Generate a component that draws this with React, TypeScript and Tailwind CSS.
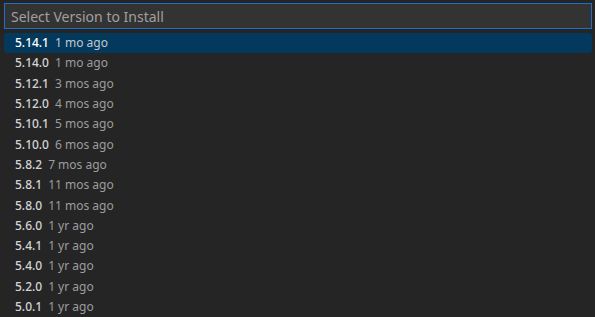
import React from "react";

const items: [string, string][] = [
  ["5.14.1", "1 mo ago"],
  ["5.14.0", "1 mo ago"],
  ["5.12.1", "3 mos ago"],
  ["5.12.0", "4 mos ago"],
  ["5.10.1", "5 mos ago"],
  ["5.10.0", "6 mos ago"],
  ["5.8.2", "7 mos ago"],
  ["5.8.1", "11 mos ago"],
  ["5.8.0", "11 mos ago"],
  ["5.6.0", "1 yr ago"],
  ["5.4.1", "1 yr ago"],
  ["5.4.0", "1 yr ago"],
  ["5.2.0", "1 yr ago"],
  ["5.0.1", "1 yr ago"],
];

export default function App() {
  return (
    <div
      className="w-[595px] h-[317px] bg-[#252526] overflow-hidden flex flex-col"
      style={{ fontFamily: '"Noto Sans", "Open Sans", sans-serif' }}
    >
      <div className="pl-[4px] pr-[3px] pt-[3px]">
        <div className="h-[26px] border border-[#1f6fc5] bg-[#333333] flex items-center px-[6px] text-[14px] text-[#a0a0a0]">
          Select Version to Install
        </div>
      </div>
      <div className="mt-[4px] pl-[4px] pr-[3px] flex flex-col">
        {items.map(([v, d], i) => (
          <div
            key={v}
            className={
              "h-[20.3px] shrink-0 flex items-center pl-[11px] gap-[6px] text-[12px] rounded-[3px] " +
              (i === 0 ? "bg-[#04395e] text-white" : "text-[#d4d4d4]")
            }
          >
            <span className="font-medium">{v}</span>
            <span className={i === 0 ? "text-[#c0c8d0]" : "text-[#9d9d9d]"}>{d}</span>
          </div>
        ))}
      </div>
    </div>
  );
}
